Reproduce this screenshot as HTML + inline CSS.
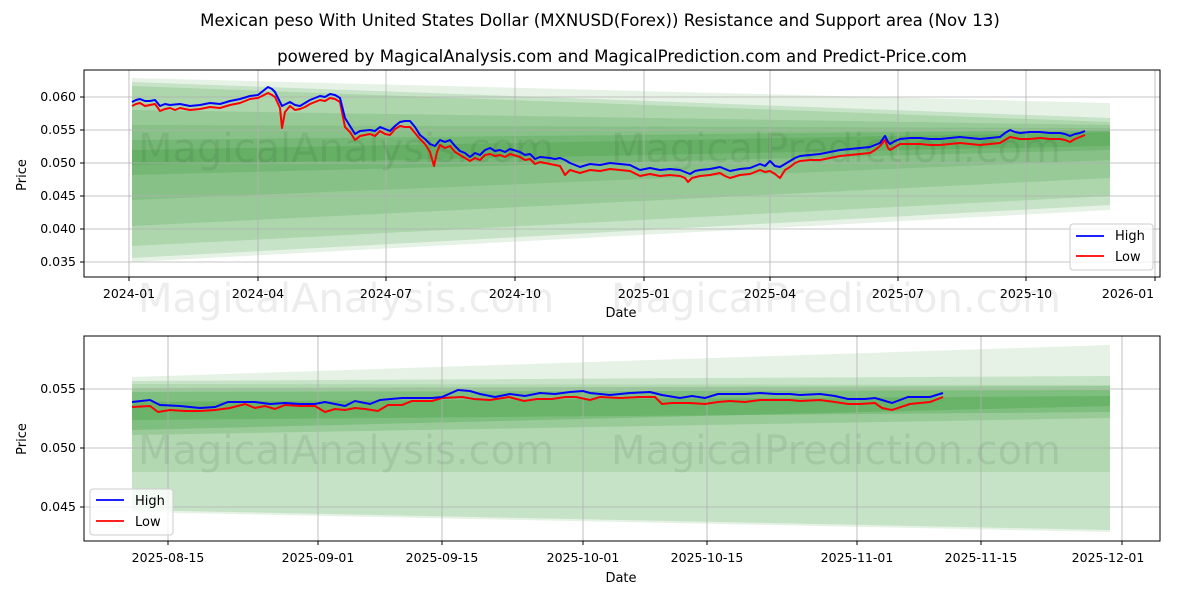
<!DOCTYPE html>
<html><head><meta charset="utf-8"><style>
body{margin:0;background:#fff}
svg{display:block;font-family:"DejaVu Sans","Liberation Sans",sans-serif}
</style></head><body>
<svg width="1200" height="600" viewBox="0 0 1200 600" xmlns="http://www.w3.org/2000/svg">
<rect width="1200" height="600" fill="#fff"/>
<text x="600" y="26" font-size="16.6" text-anchor="middle">Mexican peso With United States Dollar (MXNUSD(Forex)) Resistance and Support area (Nov 13)</text>
<text x="622" y="62" font-size="16.6" text-anchor="middle">powered by MagicalAnalysis.com and MagicalPrediction.com and Predict-Price.com</text>

<!-- TOP CHART -->
<g>
<g fill="#1a8a1a">
<polygon points="132,78 1110,103 1110,210 132,262" fill-opacity="0.11"/>
<polygon points="132,82 1110,118 1110,205 132,258" fill-opacity="0.15"/>
<polygon points="132,86 1110,122 1110,196 132,246" fill-opacity="0.15"/>
<polygon points="132,110 1110,125 1110,178 132,226" fill-opacity="0.14"/>
<polygon points="132,125 1110,128 1110,160 132,200" fill-opacity="0.13"/>
<polygon points="132,140 1110,130 1110,150 132,175" fill-opacity="0.16"/>
<polygon points="132,150 1110,132 1110,146 132,165" fill-opacity="0.16"/>
</g>
<g stroke="#b0b0b0" stroke-width="0.8">
<line x1="129" y1="70" x2="129" y2="277"/><line x1="258" y1="70" x2="258" y2="277"/><line x1="386" y1="70" x2="386" y2="277"/><line x1="515" y1="70" x2="515" y2="277"/><line x1="644" y1="70" x2="644" y2="277"/><line x1="770" y1="70" x2="770" y2="277"/><line x1="898" y1="70" x2="898" y2="277"/><line x1="1026" y1="70" x2="1026" y2="277"/><line x1="1155" y1="70" x2="1155" y2="277"/>
<line x1="84" y1="97" x2="1160" y2="97"/><line x1="84" y1="130" x2="1160" y2="130"/><line x1="84" y1="163" x2="1160" y2="163"/><line x1="84" y1="196" x2="1160" y2="196"/><line x1="84" y1="229" x2="1160" y2="229"/><line x1="84" y1="262" x2="1160" y2="262"/>
</g>
<text x="346" y="162" font-size="40" fill="#000" fill-opacity="0.07" text-anchor="middle">MagicalAnalysis.com</text>
<text x="836" y="162" font-size="40" fill="#000" fill-opacity="0.07" text-anchor="middle">MagicalPrediction.com</text>
<text x="346" y="312" font-size="40" fill="#000" fill-opacity="0.07" text-anchor="middle">MagicalAnalysis.com</text>
<text x="836" y="312" font-size="40" fill="#000" fill-opacity="0.07" text-anchor="middle">MagicalPrediction.com</text>
<polyline fill="none" stroke="#ff0000" stroke-width="2" stroke-linejoin="round" points="132,106 136,104 140,103 145,106 150,105 155,104 158,108 160,111 165,109 170,108 175,110 180,108 190,110 200,109 210,107 220,108 230,105 240,103 250,99 258,98 268,93 272,95 275,97 280,108 282,128 285,112 290,106 295,110 300,109 305,107 310,104 320,100 325,101 330,98 335,99 340,102 345,127 350,132 355,140 360,136 370,134 375,136 380,131 385,134 390,135 395,129 400,126 405,127 410,127 415,133 420,139 425,144 430,152 434,166 437,152 440,145 445,148 450,146 455,152 460,155 465,158 470,161 475,158 480,160 485,155 490,154 495,156 500,155 505,157 510,154 520,157 525,160 530,159 535,164 540,162 550,164 555,165 560,166 565,175 570,170 580,173 590,170 600,171 610,169 620,170 630,171 640,176 650,174 660,176 670,175 680,176 685,178 688,182 692,178 700,176 710,175 720,173 725,176 730,178 740,175 750,174 760,170 765,172 770,171 775,174 780,178 785,170 790,167 795,163 800,161 810,160 820,160 830,158 840,156 850,155 860,154 870,153 875,150 880,146 885,140 888,148 890,150 895,147 900,144 910,144 920,144 930,145 940,145 950,144 960,143 970,144 980,145 990,144 1000,143 1005,140 1010,137 1015,138 1020,139 1030,139 1040,138 1050,139 1060,139 1065,140 1070,142 1075,139 1080,137 1085,135"/>
<polyline fill="none" stroke="#0000ff" stroke-width="2" stroke-linejoin="round" points="132,102 136,100 140,99 145,101 150,101 155,100 160,106 165,104 170,105 180,104 190,106 200,105 210,103 220,104 230,101 240,99 250,96 258,95 268,87 272,89 275,92 282,106 290,102 295,105 300,106 305,103 310,100 320,96 325,97 330,94 335,95 340,98 345,118 350,126 355,134 360,131 370,130 375,131 380,127 385,129 390,131 395,126 400,122 405,121 410,121 415,127 420,135 425,139 430,144 435,146 440,140 445,142 450,140 455,146 460,151 465,153 470,157 475,153 480,155 485,150 490,148 495,151 500,150 505,152 510,149 520,152 525,155 530,154 535,159 540,157 550,158 555,159 560,158 565,160 570,163 580,167 590,164 600,165 610,163 620,164 630,165 640,170 650,168 660,170 670,169 680,170 685,172 690,174 695,171 700,170 710,169 720,167 725,169 730,171 740,169 750,168 760,164 765,166 770,161 775,166 780,167 785,164 790,161 795,158 800,156 810,155 820,154 830,152 840,150 850,149 860,148 870,147 880,143 885,136 888,142 890,144 895,141 900,139 910,138 920,138 930,139 940,139 950,138 960,137 970,138 980,139 990,138 1000,137 1005,133 1010,130 1015,132 1020,133 1030,132 1040,132 1050,133 1060,133 1065,134 1070,136 1075,134 1080,133 1085,131"/>
<rect x="84" y="70" width="1076" height="207" fill="none" stroke="#000" stroke-width="1"/>
<g font-size="12.5" text-anchor="end">
<text x="76" y="101">0.060</text><text x="76" y="134">0.055</text><text x="76" y="167">0.050</text><text x="76" y="200">0.045</text><text x="76" y="233">0.040</text><text x="76" y="266">0.035</text>
</g>
<g stroke="#000"><line x1="80" y1="97" x2="84" y2="97"/><line x1="80" y1="130" x2="84" y2="130"/><line x1="80" y1="163" x2="84" y2="163"/><line x1="80" y1="196" x2="84" y2="196"/><line x1="80" y1="229" x2="84" y2="229"/><line x1="80" y1="262" x2="84" y2="262"/>
<line x1="129" y1="277" x2="129" y2="281"/><line x1="258" y1="277" x2="258" y2="281"/><line x1="386" y1="277" x2="386" y2="281"/><line x1="515" y1="277" x2="515" y2="281"/><line x1="644" y1="277" x2="644" y2="281"/><line x1="770" y1="277" x2="770" y2="281"/><line x1="898" y1="277" x2="898" y2="281"/><line x1="1026" y1="277" x2="1026" y2="281"/><line x1="1155" y1="277" x2="1155" y2="281"/></g>
<g font-size="12.5" text-anchor="middle">
<text x="129" y="298">2024-01</text><text x="258" y="298">2024-04</text><text x="386" y="298">2024-07</text><text x="515" y="298">2024-10</text><text x="644" y="298">2025-01</text><text x="770" y="298">2025-04</text><text x="898" y="298">2025-07</text><text x="1026" y="298">2025-10</text><text x="1128" y="298">2026-01</text>
<text x="621" y="317" font-size="13">Date</text>
</g>
<text x="26" y="175" font-size="13" text-anchor="middle" transform="rotate(-90 26 175)">Price</text>
<rect x="1070" y="224" width="83" height="46" rx="3" fill="#fff" fill-opacity="0.8" stroke="#ccc"/>
<line x1="1076" y1="236" x2="1104" y2="236" stroke="#0000ff" stroke-width="1.8"/><text x="1115" y="240" font-size="13">High</text>
<line x1="1076" y1="256" x2="1104" y2="256" stroke="#ff0000" stroke-width="1.8"/><text x="1115" y="261" font-size="13">Low</text>
</g>

<!-- BOTTOM CHART -->
<g>
<g fill="#1a8a1a">
<polygon points="132,377 1110,345 1110,532 132,512" fill-opacity="0.11"/>
<polygon points="132,381 1110,376 1110,530 132,510" fill-opacity="0.15"/>
<polygon points="132,384 1110,385 1110,472 132,472" fill-opacity="0.12"/>
<polygon points="132,388 1110,386 1110,418 132,435" fill-opacity="0.16"/>
<polygon points="132,392 1110,390 1110,412 132,420" fill-opacity="0.2"/>
<polygon points="132,402 1110,396 1110,406 132,430" fill-opacity="0.2"/>
</g>
<g stroke="#b0b0b0" stroke-width="0.8">
<line x1="168" y1="336" x2="168" y2="541"/><line x1="318" y1="336" x2="318" y2="541"/><line x1="442" y1="336" x2="442" y2="541"/><line x1="583" y1="336" x2="583" y2="541"/><line x1="707" y1="336" x2="707" y2="541"/><line x1="857" y1="336" x2="857" y2="541"/><line x1="981" y1="336" x2="981" y2="541"/><line x1="1122" y1="336" x2="1122" y2="541"/>
<line x1="84" y1="389" x2="1160" y2="389"/><line x1="84" y1="448" x2="1160" y2="448"/><line x1="84" y1="507" x2="1160" y2="507"/>
</g>
<text x="346" y="464" font-size="40" fill="#000" fill-opacity="0.07" text-anchor="middle">MagicalAnalysis.com</text>
<text x="836" y="464" font-size="40" fill="#000" fill-opacity="0.07" text-anchor="middle">MagicalPrediction.com</text>
<polyline fill="none" stroke="#ff0000" stroke-width="2" points="132,407 150,406 158,412 170,410 185,411 200,411 215,410 230,408 245,404 255,408 265,406 275,409 285,405 300,406 315,406 325,412 335,409 345,410 355,408 365,409 378,411 388,405 402,405 412,401 432,401 442,398 462,397 474,399 490,400 509,397 524,401 537,399 552,399 565,397 576,397 590,400 600,397 620,398 640,397 655,397 662,404 672,403 690,403 705,404 718,402 730,401 745,402 760,400 775,400 790,400 800,401 820,400 835,402 848,404 860,404 875,403 882,408 892,410 910,404 930,402 943,397"/>
<polyline fill="none" stroke="#0000ff" stroke-width="2" points="132,402 150,400 160,405 180,406 200,408 215,407 228,402 245,402 255,402 270,404 285,403 300,404 315,404 325,402 335,404 345,406 355,401 370,404 380,400 402,398 432,398 442,397 458,390 470,391 480,394 495,397 510,394 525,396 540,393 555,394 570,392 583,391 590,393 610,395 630,393 650,392 662,395 680,398 692,396 705,398 718,394 730,394 745,394 760,393 775,394 790,394 800,395 820,394 835,396 848,399 865,399 875,398 882,400 892,403 908,397 930,397 943,393"/>
<rect x="84" y="336" width="1076" height="205" fill="none" stroke="#000" stroke-width="1"/>
<g font-size="12.5" text-anchor="end">
<text x="76" y="393">0.055</text><text x="76" y="452">0.050</text><text x="76" y="511">0.045</text>
</g>
<g stroke="#000"><line x1="80" y1="389" x2="84" y2="389"/><line x1="80" y1="448" x2="84" y2="448"/><line x1="80" y1="507" x2="84" y2="507"/>
<line x1="168" y1="541" x2="168" y2="545"/><line x1="318" y1="541" x2="318" y2="545"/><line x1="442" y1="541" x2="442" y2="545"/><line x1="583" y1="541" x2="583" y2="545"/><line x1="707" y1="541" x2="707" y2="545"/><line x1="857" y1="541" x2="857" y2="545"/><line x1="981" y1="541" x2="981" y2="545"/><line x1="1122" y1="541" x2="1122" y2="545"/></g>
<g font-size="12.5" text-anchor="middle">
<text x="168" y="562">2025-08-15</text><text x="318" y="562">2025-09-01</text><text x="442" y="562">2025-09-15</text><text x="583" y="562">2025-10-01</text><text x="707" y="562">2025-10-15</text><text x="857" y="562">2025-11-01</text><text x="981" y="562">2025-11-15</text><text x="1108" y="562">2025-12-01</text>
<text x="621" y="582" font-size="13">Date</text>
</g>
<text x="26" y="439" font-size="13" text-anchor="middle" transform="rotate(-90 26 439)">Price</text>
<rect x="90" y="489" width="83" height="46" rx="3" fill="#fff" fill-opacity="0.8" stroke="#ccc"/>
<line x1="96" y1="500" x2="124" y2="500" stroke="#0000ff" stroke-width="1.8"/><text x="135" y="505" font-size="13">High</text>
<line x1="96" y1="521" x2="124" y2="521" stroke="#ff0000" stroke-width="1.8"/><text x="135" y="526" font-size="13">Low</text>
</g>
</svg>
</body></html>
